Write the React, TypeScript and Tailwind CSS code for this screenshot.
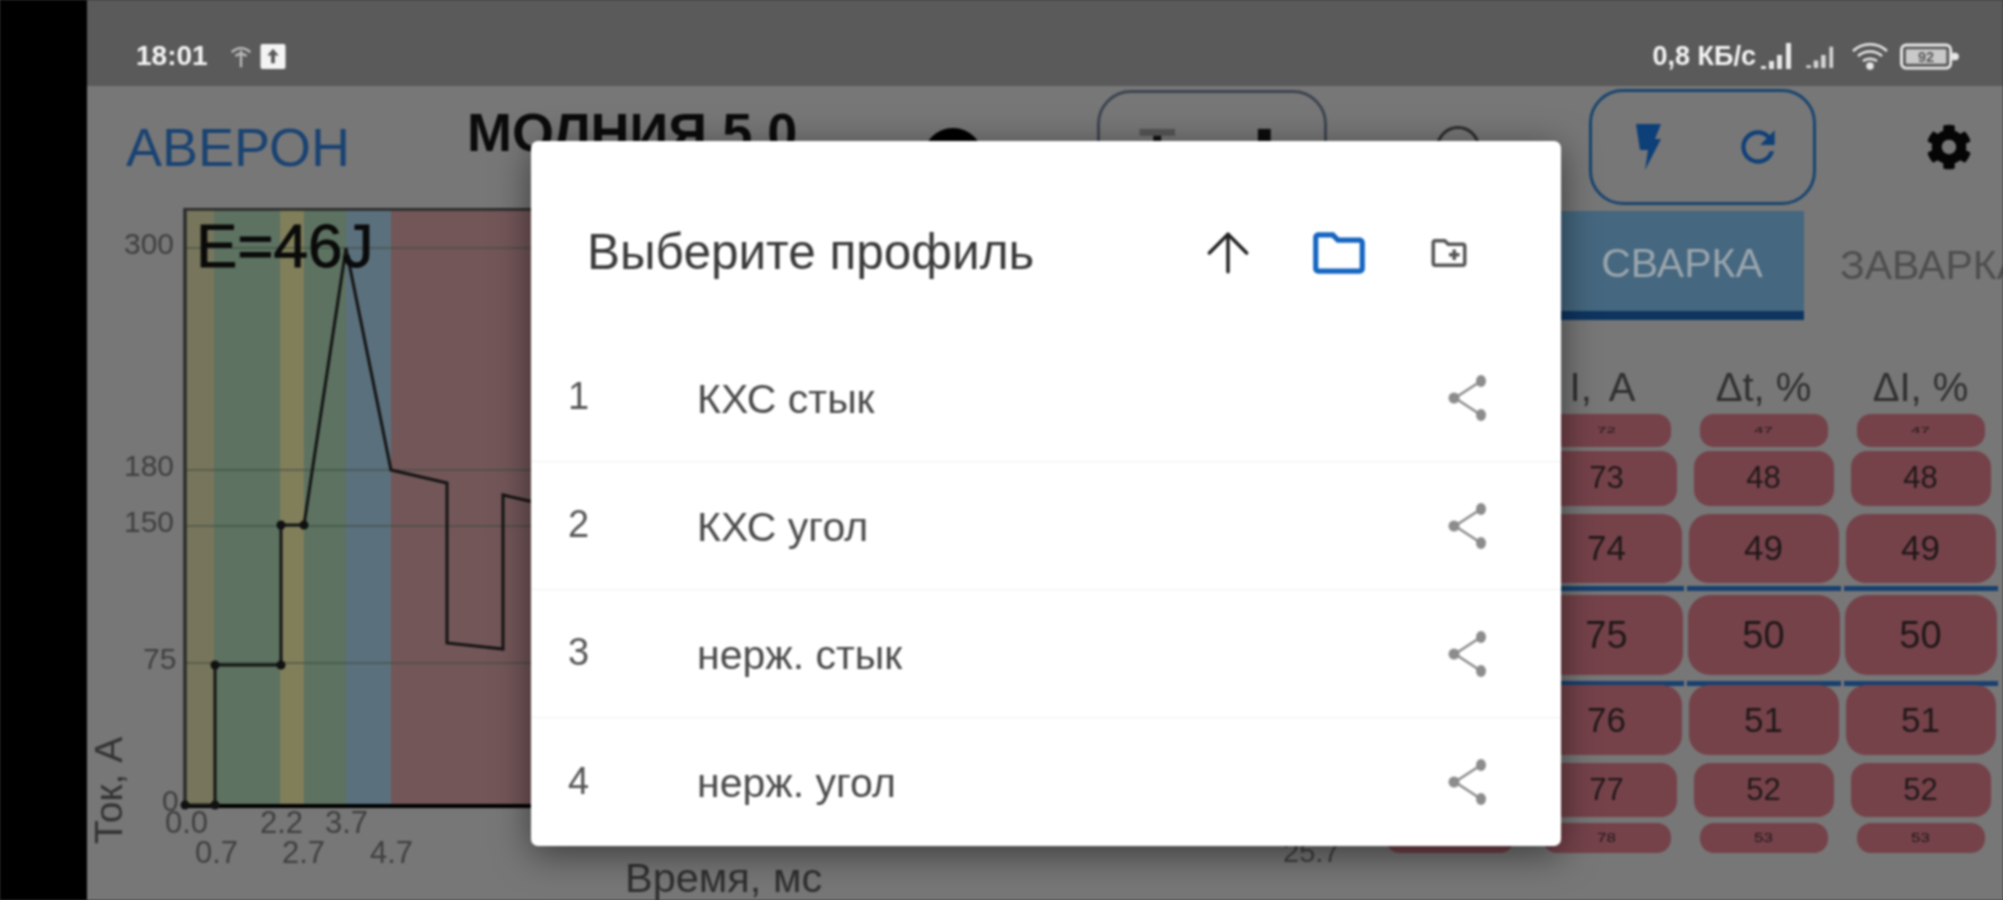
import { ArrowUp } from "lucide-react";
import { FaCog } from "react-icons/fa";
import { MdOutlineCreateNewFolder, MdOutlineFolder, MdRefresh } from "react-icons/md";

const PROFILES = ["КХС стык", "КХС угол", "нерж. стык", "нерж. угол"];

// колесо выбора: ячейки растут к центру
const WHEEL = [
  { offset: 25, cell: "mt-[1px] h-[33px] w-[128px] rounded-[14px] text-[17px]", text: "scale-y-50" },
  { offset: 26, cell: "mt-[4px] h-[55px] w-[140px] rounded-[16px] text-[31px]", text: "" },
  { offset: 27, cell: "mt-[8px] h-[69px] w-[150px] rounded-[20px] text-[35px]", text: "" },
  { offset: 28, cell: "mt-[12px] h-[80px] w-[152px] rounded-[22px] text-[38px]", text: "", line: "mt-[3px]" },
  { offset: 29, cell: "mt-[7px] h-[70px] w-[150px] rounded-[20px] text-[35px]", text: "", line: "mt-[6px]" },
  { offset: 30, cell: "mt-[8px] h-[54px] w-[140px] rounded-[16px] text-[31px]", text: "" },
  { offset: 31, cell: "mt-[6px] h-[30px] w-[128px] rounded-[14px] text-[17px]", text: "scale-y-75" },
];

const COLUMNS = [
  { title: "t, мс", base: 47, head: "" },
  { title: "I, A", base: 47, head: "[word-spacing:8px] -ml-[8px]" },
  { title: "Δt, %", base: 22, head: "" },
  { title: "ΔI, %", base: 22, head: "" },
];

const BANDS = [
  { x: 187, w: 27, fill: "#77765c" },
  { x: 214, w: 66, fill: "#5d7261" },
  { x: 280, w: 24, fill: "#817e5a" },
  { x: 304, w: 42, fill: "#5d7261" },
  { x: 346, w: 45, fill: "#5b707d" },
  { x: 391, w: 920, fill: "#735658" },
];

const GRID = [
  { y: 248, label: "300", tx: 124 },
  { y: 470, label: "180", tx: 124 },
  { y: 526, label: "150", tx: 124 },
  { y: 663, label: "75", tx: 143 },
  { y: 805, label: "0", tx: 162 },
];

const X_LABELS = [
  { x: 165, y: 833, t: "0.0" },
  { x: 195, y: 863, t: "0.7" },
  { x: 260, y: 833, t: "2.2" },
  { x: 282, y: 863, t: "2.7" },
  { x: 325, y: 833, t: "3.7" },
  { x: 370, y: 863, t: "4.7" },
];

const DOTS = [
  [185, 805],
  [215, 805],
  [215, 665],
  [281, 665],
  [281, 525],
  [304, 525],
];

function ShareIcon() {
  return (
    <svg viewBox="0 0 40 46" className="h-[46px] w-[40px] shrink-0" fill="#8c8c8c" stroke="#8c8c8c" strokeWidth={2.5}>
      <path d="M33 6 7 23l26 17" fill="none" />
      <ellipse cx="33" cy="6" rx="5" ry="6" strokeWidth={0} />
      <ellipse cx="6" cy="23" rx="5.5" ry="5.5" strokeWidth={0} />
      <ellipse cx="33" cy="40" rx="5" ry="6" strokeWidth={0} />
    </svg>
  );
}

function Chart() {
  return (
    <svg viewBox="87 208 1284 692" className="h-[692px] w-[1284px] shrink-0" fontFamily="'Liberation Sans', sans-serif">
      {BANDS.map((b) => (
        <rect key={b.x} x={b.x} y={210} width={b.w} height={595} fill={b.fill} />
      ))}
      {GRID.map((g) => (
        <g key={g.y}>
          <line x1={185} x2={1311} y1={g.y} y2={g.y} stroke="#3c4a40" strokeWidth={1.5} opacity={0.7} />
          <text x={g.tx} y={g.y + 6} fontSize={30} fill="#3f3f3f">
            {g.label}
          </text>
        </g>
      ))}
      <path d="M185 805V209H1311" fill="none" stroke="#2c2c2c" strokeWidth={3.5} />
      <line x1={185} x2={1311} y1={806} y2={806} stroke="#000" strokeWidth={4} />
      <polyline
        points="185,805 215,805 215,665 281,665 281,525 304,525 346,248 391,470 447,483 447,643 503,649 503,495 560,508"
        fill="none"
        stroke="#141414"
        strokeWidth={3}
      />
      {DOTS.map(([x, y]) => (
        <circle key={`${x}-${y}`} cx={x} cy={y} r={4.5} fill="#111" />
      ))}
      <text x={196} y={267} fontSize={62} fill="#0a0a0a" stroke="#0a0a0a" strokeWidth={0.9}>
        E=46J
      </text>
      {X_LABELS.map((l) => (
        <text key={l.t} x={l.x} y={l.y} fontSize={31} fill="#3f3f3f">
          {l.t}
        </text>
      ))}
      <text transform="translate(122 844) rotate(-90)" fontSize={39} fill="#333">
        Ток, А
      </text>
      <text x={625} y={892} fontSize={41.5} fill="#2f2f2f">
        Время, мс
      </text>
      <text x={1283} y={862} fontSize={29} fill="#3f3f3f">
        25.7
      </text>
    </svg>
  );
}

function Wheel() {
  return (
    <div className="flex">
      {COLUMNS.map((col) => (
        <div key={col.title} className="flex w-[157px] flex-col items-center">
          <div className={`flex h-[93px] items-center pt-[40px] text-[40px] text-[#2f2f2f] ${col.head}`}>{col.title}</div>
          {WHEEL.map((row) => (
            <div key={row.offset} className="contents">
              {row.line && <div className={`-mb-[8px] h-[5px] w-[154px] bg-[#18406f] ${row.line}`} />}
              <div className={`flex shrink-0 items-center justify-center bg-[#75424a] text-[#1f1818] ${row.cell}`}>
                <span className={row.text}>{col.base + row.offset}</span>
              </div>
            </div>
          ))}
        </div>
      ))}
    </div>
  );
}

function StatusBar() {
  return (
    <div className="flex h-[86px] shrink-0 items-center bg-[#5a5a5a] pt-[26px] pr-[44px] pl-[49px] text-[27px] font-bold text-[#f4f4f4]">
      <span className="w-[74px] text-[28px]">18:01</span>
      <svg viewBox="0 0 28 28" className="ml-[18px] h-[26px] w-[26px]" fill="none" stroke="#bdbdbd" strokeWidth={2.5}>
        <path d="M4 10c6-6 14-6 20 0M8 14c4-3 8-3 12 0M14 8v18" />
      </svg>
      <svg viewBox="0 0 26 26" className="ml-[6px] h-[25px] w-[26px]">
        <rect width="26" height="26" rx="2" fill="#f4f4f4" />
        <path d="M13 5l6 7h-4v8h-4v-8H7z" fill="#5a5a5a" />
      </svg>
      <span className="ml-auto whitespace-nowrap">0,8 КБ/с</span>
      <svg viewBox="0 0 34 26" className="ml-[5px] h-[26px] w-[34px]" fill="#e8e8e8">
        <path d="M0 23h5v3H0zM8 18h5v8H8zM16 12h5v14h-5zM25 0h5v26h-5z" />
      </svg>
      <svg viewBox="0 0 34 26" className="ml-[11px] h-[24px] w-[32px]" fill="#d4d4d4">
        <path d="M0 23h5v3H0zM8 18h5v8H8zM16 12h5v14h-5zM25 3h4v23h-4z" />
      </svg>
      <svg viewBox="0 0 38 28" className="ml-[13px] h-[28px] w-[38px]" fill="none" stroke="#e8e8e8" strokeWidth={2.5}>
        <path d="M2 9c10-9 24-9 34 0M7 14c7-6 17-6 24 0M12 19c4-3 10-3 14 0" />
        <circle cx="19" cy="24" r="2.5" fill="#e8e8e8" />
      </svg>
      <svg viewBox="0 0 60 28" className="ml-[10px] h-[27px] w-[60px]">
        <rect x="1.5" y="2" width="51" height="24" rx="5" fill="none" stroke="#e8e8e8" strokeWidth={3} />
        <rect x="6" y="6.5" width="42" height="15" rx="1" fill="#c9c9c9" />
        <path d="M54 10h3a3 3 0 0 1 0 8h-3z" fill="#e8e8e8" />
        <text x="27" y="20" textAnchor="middle" fontSize="15" fontWeight="700" fill="#5a5a5a" fontFamily="'Liberation Sans', sans-serif">
          92
        </text>
      </svg>
    </div>
  );
}

function TopBar() {
  return (
    <div className="flex h-[122px] shrink-0 items-center pl-[39px]">
      <div className="w-[341px] text-[54px] text-[#1a4372]">АВЕРОН</div>
      <div className="-mt-[30px] w-[456px] text-[54px] font-bold whitespace-nowrap text-[#0b0b0b]">МОЛНИЯ 5.0</div>
      <div className="w-[174px]">
        <div className="mt-[22px] h-[60px] w-[60px] rounded-full bg-black" />
      </div>
      <div className="flex h-[115px] w-[230px] shrink-0 items-start rounded-[34px] border-[3px] border-[#3d4450]">
        <svg viewBox="0 0 227 60" className="h-[60px] w-[224px]">
          <rect x="40" y="36" width="36" height="7" fill="#565656" />
          <rect x="54" y="43" width="8" height="12" fill="#111" />
          <rect x="160" y="36" width="13" height="18" fill="#0c0c0c" />
          <rect x="146" y="50" width="40" height="4" fill="#0c0c0c" />
        </svg>
      </div>
      <div className="flex w-[262px] shrink-0 justify-center">
        <div className="mt-[2px] h-[44px] w-[44px] rounded-full border-[3px] border-[#2c2c2c]" />
      </div>
      <div className="flex h-[116px] w-[227px] shrink-0 items-center justify-between rounded-[34px] border-[3px] border-[#18456f] pr-[30px] pl-[43px]">
        <svg viewBox="0 0 26 46" className="h-[46px] w-[26px]" fill="#0d3f78">
          <path d="M1 0h25l-6 15h6L10 46l3-20H5z" />
        </svg>
        <MdRefresh size={50} color="#0f3f78" />
      </div>
      <FaCog size={46} color="#050505" className="ml-[110px] shrink-0" />
    </div>
  );
}

function ProfileDialog() {
  return (
    <div className="absolute top-[141px] left-[531px] flex h-[705px] w-[1030px] flex-col overflow-hidden rounded-[7px] bg-white font-['Liberation_Sans',sans-serif] shadow-[0_8px_36px_rgba(0,0,0,0.5)]">
      <div className="flex h-[193px] shrink-0 items-center pt-[30px] pl-[56px]">
        <div className="w-[620px] text-[49.5px] whitespace-nowrap text-[#3a3a3a]">Выберите профиль</div>
        <ArrowUp size={64} strokeWidth={1.3} color="#222" className="ml-[-11px]" />
        <MdOutlineFolder size={62} color="#1565c0" className="ml-[48px]" />
        <MdOutlineCreateNewFolder size={42} color="#555" className="ml-[58px]" />
      </div>
      {PROFILES.map((name, i) => (
        <div key={name} className={`flex h-[128px] shrink-0 items-center pr-[73px] pl-[37px] ${i < 3 ? "border-b border-[#f1f1f1]" : ""}`}>
          <span className="-mt-[2px] w-[129px] text-[38px] text-[#555]">{i + 1}</span>
          <span className="mt-[4px] flex-1 text-[41px] text-[#4a4a4a]">{name}</span>
          <ShareIcon />
        </div>
      ))}
    </div>
  );
}

export default function App() {
  return (
    <div className="h-[900px] w-[2003px] overflow-hidden bg-[#3a3a3a]">
      <div className="relative flex h-[900px] w-[2003px] bg-black font-['Liberation_Sans',sans-serif] blur-[0.8px]">
        <div className="w-[87px] shrink-0" />
        <div className="flex min-w-0 flex-1 flex-col overflow-hidden bg-[#777777]">
          <StatusBar />
          <TopBar />
          <div className="flex">
            <Chart />
            <div className="flex-1">
              <div className="mt-[3px] flex h-[109px] items-stretch text-[41px]">
                <div className="ml-[189px] flex w-[244px] shrink-0 items-center justify-center border-b-[9px] border-[#0e3560] bg-[#45677f] pt-[6px] text-[#9aa5ad]">
                  СВАРКА
                </div>
                <div className="ml-[36px] flex items-center whitespace-nowrap text-[#4e4e4e]">ЗАВАРКА</div>
              </div>
              <Wheel />
            </div>
          </div>
        </div>
        <ProfileDialog />
      </div>
    </div>
  );
}
